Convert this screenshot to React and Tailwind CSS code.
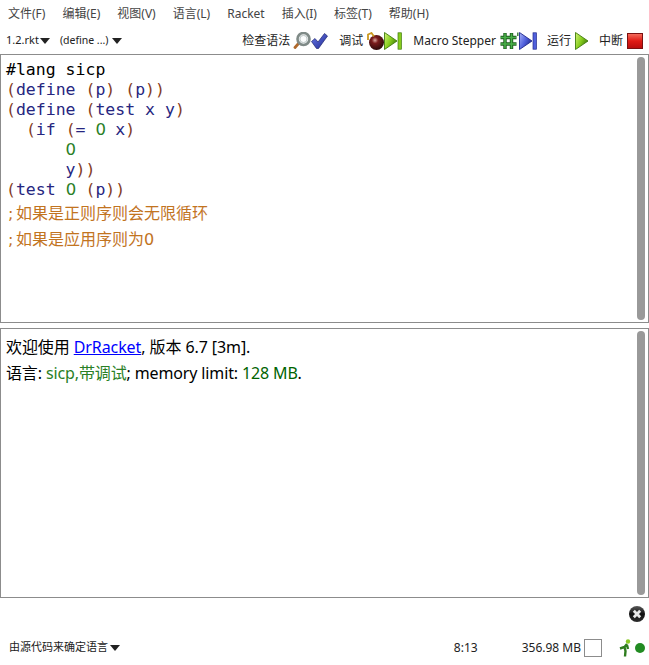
import React from "react";

const menus = ["文件(F)", "编辑(E)", "视图(V)", "语言(L)", "Racket", "插入(I)", "标签(T)", "帮助(H)"];

const Caret = () => (
  <svg width="10" height="6" viewBox="0 0 10 6" className="ml-[1px]">
    <path d="M0 0h10L5 6z" fill="#222" />
  </svg>
);

const Play = ({ id, light, mid, dark, bar }) => (
  <svg width={bar ? 18 : 14} height="18" viewBox={bar ? "0 0 18 18" : "0 0 14 18"}>
    <defs>
      <linearGradient id={id} x1="0" y1="0" x2="1" y2="0.6">
        <stop offset="0" stopColor={light} />
        <stop offset="0.55" stopColor={mid} />
        <stop offset="1" stopColor={dark} />
      </linearGradient>
    </defs>
    <path d="M0.5 0.5L13 9L0.5 17.5z" fill={`url(#${id})`} stroke={dark} strokeWidth="0.9" />
    {bar && <rect x="14" y="0.8" width="3.4" height="16.4" fill={mid} stroke={dark} strokeWidth="0.7" />}
  </svg>
);

const Magnifier = () => (
  <svg width="18" height="17" viewBox="0 0 18 17">
    <path d="M2 15.5l3.5-4" stroke="#b0692c" strokeWidth="2.8" strokeLinecap="round" />
    <circle cx="10.5" cy="7" r="6" fill="#eef2f2" stroke="#7f8a87" strokeWidth="2.6" />
    <circle cx="10.5" cy="7" r="3.6" fill="#fbfdfd" stroke="#bcc5c5" strokeWidth="1" />
  </svg>
);

const Check = () => (
  <svg width="17" height="16" viewBox="0 0 17 16">
    <defs>
      <linearGradient id="chk" x1="0" y1="0" x2="1" y2="1">
        <stop offset="0" stopColor="#6c7cec" />
        <stop offset="1" stopColor="#1f2890" />
      </linearGradient>
    </defs>
    <path d="M0.5 8.5L4 5.5L7 9L13.5 0.5L16.5 3L7.5 15.5H5.5z" fill="url(#chk)" stroke="#1c2470" strokeWidth="0.7" />
  </svg>
);

const Bomb = () => (
  <svg width="17" height="18" viewBox="0 0 17 18">
    <defs>
      <radialGradient id="bomb" cx="0.4" cy="0.35" r="0.7">
        <stop offset="0" stopColor="#d9a8a0" />
        <stop offset="0.3" stopColor="#7a1c1c" />
        <stop offset="1" stopColor="#240808" />
      </radialGradient>
    </defs>
    <circle cx="9.5" cy="10.5" r="7.5" fill="url(#bomb)" />
    <path d="M1 8V2.5L4.5 1L7 4.5" fill="none" stroke="#c9971c" strokeWidth="1.8" />
  </svg>
);

const Hash = () => (
  <svg width="19" height="18" viewBox="0 0 19 18">
    <path d="M5 1v16M11.5 1v16M0.5 5.5h16M0.5 12h16" stroke="#1d5c1d" strokeWidth="3.4" fill="none" />
    <path d="M5 1.5v15M11.5 1.5v15M1 5.5h15M1 12h15" stroke="#49b049" strokeWidth="1.6" fill="none" />
    <path d="M17.8 0.5v3.5" stroke="#3a7a3a" strokeWidth="1.4" />
  </svg>
);

const Stop = () => (
  <svg width="16" height="16" viewBox="0 0 16 16">
    <defs>
      <linearGradient id="stop" x1="0" y1="0" x2="0" y2="1">
        <stop offset="0" stopColor="#f47060" />
        <stop offset="0.5" stopColor="#e01a14" />
        <stop offset="1" stopColor="#b80c0c" />
      </linearGradient>
    </defs>
    <rect x="0.5" y="0.5" width="15" height="15" fill="url(#stop)" stroke="#7a1010" />
  </svg>
);

const CloseIcon = () => (
  <svg width="16" height="16" viewBox="0 0 16 16">
    <defs>
      <linearGradient id="cls" x1="0" y1="0" x2="0" y2="1">
        <stop offset="0" stopColor="#5a5a5a" />
        <stop offset="0.5" stopColor="#111111" />
        <stop offset="1" stopColor="#2c2c2c" />
      </linearGradient>
    </defs>
    <circle cx="8" cy="8" r="8" fill="url(#cls)" />
    <path d="M4.8 4.8l6.4 6.4M11.2 4.8l-6.4 6.4" stroke="#e8e8e8" strokeWidth="2.8" />
  </svg>
);

const Walker = () => (
  <svg width="12" height="18" viewBox="0 0 12 18">
    <circle cx="9" cy="2.5" r="2.2" fill="#8ac926" />
    <path d="M8 5L5.5 8L1 9.5M5.5 8L6.5 12L6 17.5M8 6L9 10" stroke="#2e7d1e" strokeWidth="2.4" fill="none" />
  </svg>
);

const Scrollbar = () => (
  <div className="w-[8px] rounded-full bg-[#999999] my-[2px] mr-[3px] ml-auto shrink-0" />
);

const P = ({ children }) => <span className="text-[#843c24]">{children}</span>;
const S = ({ children }) => <span className="text-[#262680]">{children}</span>;
// plain zero without the dot of the mono face
const N = () => (
  <span className="inline-block w-[9.93px] text-center text-[#298026] font-['DejaVu_Sans',sans-serif]">0</span>
);

const Comment = ({ children }) => (
  <div className="text-[#c2741f] h-[26px] leading-[26px] font-['DejaVu_Sans','Noto_Sans_CJK_SC',sans-serif] text-[16px] pl-[2px]">
    <span className="inline-block w-[8px]">;</span>
    {children}
  </div>
);

export default function App() {
  return (
    <div className="w-[649px] h-[665px] bg-white overflow-hidden flex flex-col font-['Noto_Sans','Noto_Sans_CJK_SC',sans-serif] text-[#222]">
      {/* menu */}
      <div className="h-[27px] flex items-center pl-[8px] gap-[17px] text-[12px] text-[#444]">
        {menus.map((m) => (
          <span key={m}>{m}</span>
        ))}
      </div>

      {/* toolbar */}
      <div className="h-[27px] flex items-center pl-[6px] pr-[6px] text-[12px] text-[#222]">
        <span className="text-[11px]">1.2.rkt</span>
        <Caret />
        <span className="ml-[10px] text-[10.5px]">(define ...)</span>
        <span className="ml-[3px] flex"><Caret /></span>
        <div className="ml-auto flex items-center">
          <span>检查语法</span>
          <span className="ml-[3px] flex items-center"><Magnifier /><Check /></span>
          <span className="ml-[11px]">调试</span>
          <span className="ml-[4px] flex items-center"><Bomb /><Play id="dbg" light="#d4f47a" mid="#86cc1c" dark="#3f7a0c" bar /></span>
          <span className="ml-[11px]">Macro Stepper</span>
          <span className="ml-[4px] flex items-center"><Hash /><Play id="mac" light="#aab4f8" mid="#5060dc" dark="#20288c" bar /></span>
          <span className="ml-[10px]">运行</span>
          <span className="ml-[4px] flex items-center"><Play id="run" light="#d4f47a" mid="#86cc1c" dark="#3f7a0c" /></span>
          <span className="ml-[10px]">中断</span>
          <span className="ml-[4px] flex items-center"><Stop /></span>
        </div>
      </div>

      {/* definitions */}
      <div className="h-[269px] border border-[#8c8c8c] flex shrink-0">
        <div className="pl-[5px] pt-[5px] flex-1 font-['DejaVu_Sans_Mono',monospace] text-[16.5px] leading-[20px] whitespace-pre">
          <div className="text-black">#lang sicp</div>
          <div><P>(</P><S>define</S> <P>(</P><S>p</S><P>)</P> <P>(</P><S>p</S><P>))</P></div>
          <div><P>(</P><S>define</S> <P>(</P><S>test x y</S><P>)</P></div>
          <div>  <P>(</P><S>if</S> <P>(</P><S>=</S> <N /> <S>x</S><P>)</P></div>
          <div>      <N /></div>
          <div>      <S>y</S><P>))</P></div>
          <div><P>(</P><S>test</S> <N /> <P>(</P><S>p</S><P>))</P></div>
          <div className="h-[1px]" />
          <Comment>如果是正则序则会无限循环</Comment>
          <Comment>如果是应用序则为0</Comment>
        </div>
        <Scrollbar />
      </div>

      <div className="h-[5px] shrink-0" />

      {/* interactions */}
      <div className="h-[270px] border border-[#8c8c8c] flex shrink-0">
        <div className="pl-[5px] pt-[5px] flex-1 text-[16px] leading-[26px] text-black">
          <div className="tracking-[-0.09px]">
            欢迎使用 <span className="text-[#0000ff] underline">DrRacket</span>, 版本 6.7 [3m].
          </div>
          <div className="tracking-[-0.13px]">
            语言: <span className="text-[#298026]">sicp,带调试</span>; memory limit: <span className="text-[#006400]">128 MB</span>.
          </div>
        </div>
        <Scrollbar />
      </div>

      {/* close */}
      <div className="h-[32px] flex items-center justify-end pr-[4px] shrink-0">
        <CloseIcon />
      </div>

      {/* status */}
      <div className="flex-1 flex items-center text-[12px] text-[#222] pl-[9px] pr-[4px]">
        <span className="text-[11px]">由源代码来确定语言</span>
        <span className="ml-[1px]"><Caret /></span>
        <span className="ml-auto">8:13</span>
        <span className="ml-[44px]">356.98 MB</span>
        <span className="ml-[3px] w-[18px] h-[18px] border border-[#8c8c8c]" />
        <span className="ml-[17px] flex"><Walker /></span>
        <span className="ml-[4px] w-[10px] h-[10px] rounded-full bg-[#228b22]" />
      </div>
    </div>
  );
}
